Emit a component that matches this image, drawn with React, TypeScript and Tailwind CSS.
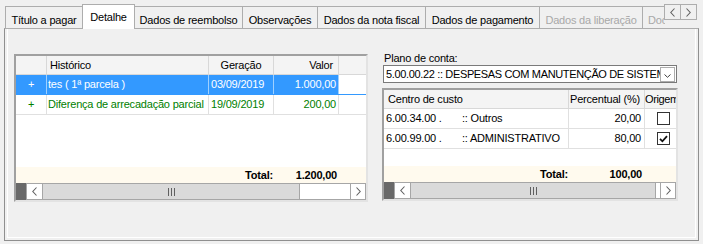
import React from 'react';

const tabs = [
  { label: 'Título a pagar', w: 'w-[78px]' },
  { label: 'Detalhe', w: 'w-[53px]', active: true },
  { label: 'Dados de reembolso', w: 'w-[109px]' },
  { label: 'Observações', w: 'w-[76px]' },
  { label: 'Dados da nota fiscal', w: 'w-[109px]' },
  { label: 'Dados de pagamento', w: 'w-[115px]' },
  { label: 'Dados da liberação', w: 'w-[104px]', disabled: true },
];

function Chevron({ dir }: { dir: 'left' | 'right' }) {
  return (
    <svg width="5" height="9" viewBox="0 0 5 9" className="block">
      <path
        d={dir === 'left' ? 'M4.5 0.5 L0.8 4.5 L4.5 8.5' : 'M0.5 0.5 L4.2 4.5 L0.5 8.5'}
        fill="none"
        stroke="#606060"
        strokeWidth="1.1"
      />
    </svg>
  );
}

function Grip() {
  return (
    <div className="flex gap-[2px]">
      <span className="w-px h-[8px] bg-[#606060]" />
      <span className="w-px h-[8px] bg-[#606060]" />
      <span className="w-px h-[8px] bg-[#606060]" />
    </div>
  );
}

function ScrollBar({ thumb, track }: { thumb: string; track: string }) {
  return (
    <div className="flex h-[17px] shrink-0">
      <div className="w-[10px] bg-[#696969]" />
      <div className="w-[17px] bg-white border border-[#a6a6a6] flex items-center justify-center">
        <Chevron dir="left" />
      </div>
      <div className={`${thumb} bg-[#dadada] border-y border-r border-[#a6a6a6] flex items-center justify-center`}>
        <Grip />
      </div>
      <div className={`${track} bg-white border-y border-[#a6a6a6]`} />
      <div className="flex-1 bg-white border border-[#a6a6a6] flex items-center justify-center">
        <Chevron dir="right" />
      </div>
    </div>
  );
}

function CheckBox({ checked }: { checked?: boolean }) {
  return (
    <div className="w-[13px] h-[13px] border border-[#333333] bg-white flex items-center justify-center">
      {checked && (
        <svg width="9" height="8" viewBox="0 0 9 8">
          <path d="M1 3.8 L3.4 6.3 L8 1.2" fill="none" stroke="#111" strokeWidth="1.8" />
        </svg>
      )}
    </div>
  );
}

function LeftGrid() {
  const rows = [
    { h: 'tes ( 1ª parcela )', g: '03/09/2019', v: '1.000,00', sel: true },
    { h: 'Diferença de arrecadação parcial', g: '19/09/2019', v: '200,00' },
  ];
  return (
    <div className="mt-[3px] w-[354px] h-[148px] border-2 border-t-[#a0a0a0] border-l-[#a0a0a0] border-r-[#e3e3e3] border-b-[#e3e3e3] flex flex-col bg-white">
      <div className="flex h-[19px] shrink-0 bg-[#f4f4f4] border-b border-[#d8d8d8] leading-[18px]">
        <div className="w-[31px] border-r border-[#d8d8d8]" />
        <div className="w-[162px] border-r border-[#d8d8d8] pl-[3px]">Histórico</div>
        <div className="w-[65px] border-r border-[#d8d8d8] text-center">Geração</div>
        <div className="w-[65px] border-r border-[#d8d8d8] text-right pr-[5px]">Valor</div>
        <div className="flex-1" />
      </div>
      {rows.map((r) => (
        <div
          key={r.h}
          className={`flex shrink-0 h-[20px] leading-[19px] border-b ${
            r.sel ? 'bg-[#3399ff] text-white border-[#3399ff]' : 'bg-white text-[#008000] border-[#e0e0e0]'
          }`}
        >
          <div className={`w-[31px] border-r text-center ${r.sel ? 'border-[#9fd0ff]' : 'border-[#e0e0e0]'}`}>+</div>
          <div className={`w-[162px] border-r pl-[1px] whitespace-nowrap overflow-hidden ${r.sel ? 'border-[#9fd0ff]' : 'border-[#e0e0e0]'}`}>
            {r.h}
          </div>
          <div className={`w-[65px] border-r pl-[2px] ${r.sel ? 'border-[#9fd0ff]' : 'border-[#e0e0e0]'}`}>{r.g}</div>
          <div className={`w-[65px] border-r text-right pr-[2px] ${r.sel ? 'border-[#9fd0ff]' : 'border-[#e0e0e0]'}`}>
            {r.v}
          </div>
          <div className="flex-1 bg-white" />
        </div>
      ))}
      <div className="flex-1" />
      <div className="flex h-[16px] shrink-0 bg-[#fffaee] font-bold leading-[16px] text-black">
        <div className="w-[258px] text-right pr-[1px]">Total:</div>
        <div className="w-[65px] text-right pr-[2px]">1.200,00</div>
      </div>
      <ScrollBar thumb="w-[257px]" track="w-[50px]" />
    </div>
  );
}

function RightGrid() {
  const rows = [
    { c: '6.00.34.00 .', n: ':: Outros', p: '20,00', chk: false },
    { c: '6.00.99.00 .', n: ':: ADMINISTRATIVO', p: '80,00', chk: true },
  ];
  return (
    <div className="mt-[5px] w-[296px] h-[113px] border-2 border-t-[#a0a0a0] border-l-[#a0a0a0] border-r-[#e3e3e3] border-b-[#e3e3e3] flex flex-col bg-white overflow-hidden">
      <div className="flex h-[19px] shrink-0 bg-[#f4f4f4] border-b border-[#d8d8d8] leading-[18px] whitespace-nowrap">
        <div className="w-[185px] border-r border-[#d8d8d8] pl-[4px]">Centro de custo</div>
        <div className="w-[76px] border-r border-[#d8d8d8] pl-[1px]">Percentual (%)</div>
        <div className="flex-1 overflow-hidden tracking-[-0.4px]">Origem</div>
      </div>
      {rows.map((r) => (
        <div key={r.c} className="flex shrink-0 h-[20px] leading-[19px] border-b border-[#e0e0e0] text-black">
          <div className="w-[185px] border-r border-[#e0e0e0] pl-[2px] flex whitespace-nowrap">
            <span className="w-[76px]">{r.c}</span>
            <span>{r.n}</span>
          </div>
          <div className="w-[76px] border-r border-[#e0e0e0] text-right pr-[3px]">{r.p}</div>
          <div className="flex-1 flex items-center pl-[12px]">
            <CheckBox checked={r.chk} />
          </div>
        </div>
      ))}
      <div className="flex-1" />
      <div className="flex h-[16px] shrink-0 bg-[#fffaee] font-bold leading-[16px] text-black">
        <div className="w-[184px] text-right">Total:</div>
        <div className="w-[75px] text-right pr-[1px]">100,00</div>
      </div>
      <ScrollBar thumb="w-[245px]" track="w-[4px]" />
    </div>
  );
}

export default function App() {
  return (
    <div className="w-[703px] h-[244px] bg-[#f0f0f0] overflow-hidden relative text-[11px] tracking-[-0.2px] text-black font-['Liberation_Sans',Arial,sans-serif]">
      <div className="h-[28px] flex items-end pl-[5px] relative z-10">
        {tabs.map((t, i) => (
          <div
            key={t.label}
            className={`${t.w} ${i > 0 ? '-ml-px' : ''} border border-b-0 border-[#adadad] flex justify-center whitespace-nowrap ${
              t.active
                ? 'h-[25px] -mb-px bg-white pt-[4px] relative z-10'
                : 'h-[22px] bg-[#f0f0f0] pt-[5px]'
            } ${t.disabled ? 'text-[#a8a8a8]' : ''}`}
          >
            {t.label}
          </div>
        ))}
        <div className="w-[23px] -ml-px h-[22px] border-l border-t border-[#adadad] bg-[#f0f0f0] pt-[5px] pl-[5px] overflow-hidden whitespace-nowrap text-[#a8a8a8]">
          Documentos
        </div>
        <div className="absolute left-[664px] top-[4px] flex">
          <div className="w-[17px] h-[16px] border border-[#adadad] bg-[#f0f0f0] flex items-center justify-center">
            <Chevron dir="left" />
          </div>
          <div className="w-[17px] h-[16px] -ml-px border border-[#adadad] bg-[#f0f0f0] flex items-center justify-center">
            <Chevron dir="right" />
          </div>
        </div>
      </div>
      <div className="ml-[4px] w-[695px] h-[213px] border border-[#8f8f8f] border-t-[#adadad] pb-[2px] px-[2px]">
        <div className="h-full border-x border-b border-white flex gap-[14px] pl-[6px] pt-[22px] items-start">
          <LeftGrid />
          <div className="flex flex-col">
            <div className="h-[14px] leading-[14px] pl-[2px]">Plano de conta:</div>
            <div className="ml-px w-[294px] h-[18px] border border-[#7a7a7a] bg-white flex items-center">
              <div className="flex-1 overflow-hidden whitespace-nowrap pl-[2px] leading-[16px] tracking-[-0.35px]">
                5.00.00.22 :: DESPESAS COM MANUTENÇÃO DE SISTEMAS
              </div>
              <div className="w-[15px] h-[15px] mr-px border border-[#adadad] bg-white flex items-end justify-center pb-[3px]">
                <svg width="7" height="4" viewBox="0 0 7 4">
                  <path d="M0.5 0.5 L3.5 3.3 L6.5 0.5" fill="none" stroke="#404040" strokeWidth="1" />
                </svg>
              </div>
            </div>
            <RightGrid />
          </div>
        </div>
      </div>
    </div>
  );
}
